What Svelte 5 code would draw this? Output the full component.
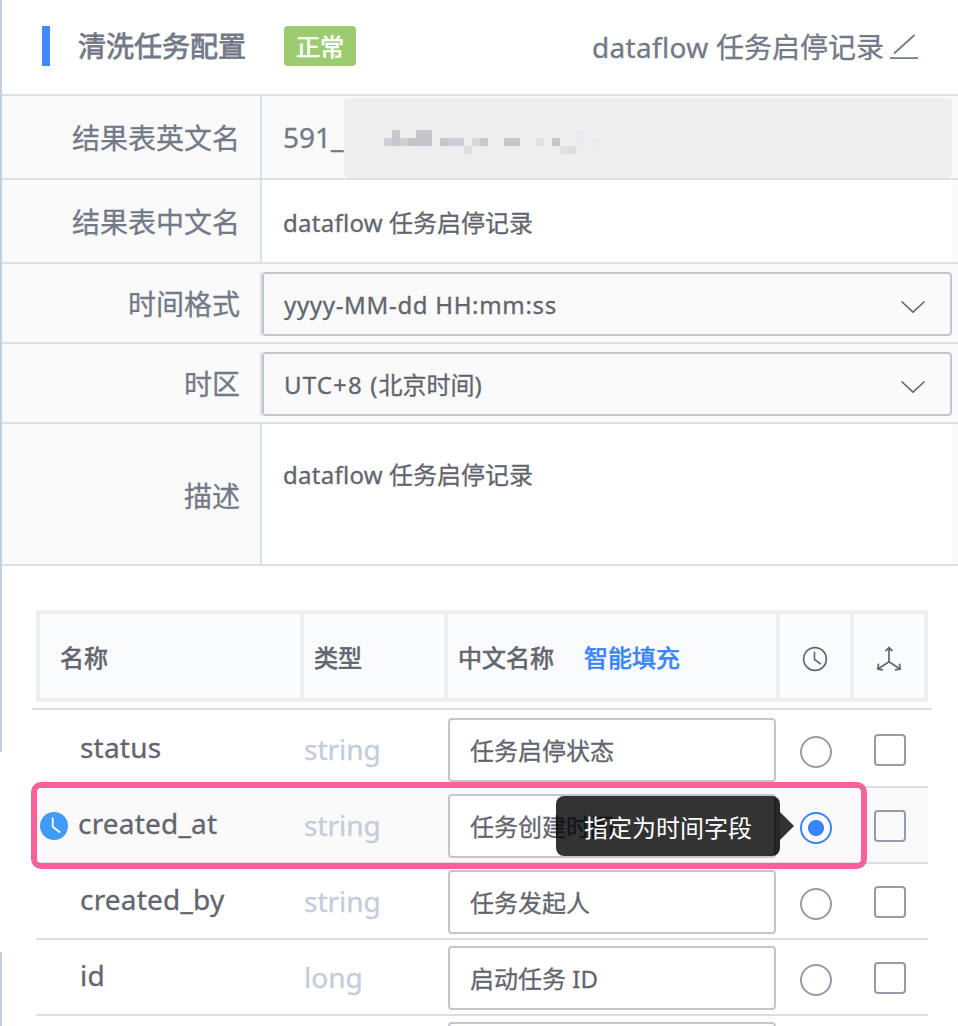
<script>
  const mosaic = [
    [8, 0, 8, 8, '#cacace'], [32, 0, 16, 16, '#c5c5cb'],
    [0, 8, 8, 8, '#d0d0d6'], [8, 8, 8, 8, '#c7c7cd'], [16, 8, 8, 8, '#cfcfd4'], [24, 8, 8, 8, '#c2c2c8'],
    [56, 8, 8, 8, '#c5c5cb'], [64, 8, 16, 8, '#ceced4'], [80, 16, 8, 8, '#dddee1'], [88, 8, 8, 8, '#d9d9dd'],
    [96, 8, 8, 8, '#c7c7cc'], [120, 8, 16, 8, '#c5c5cc'], [152, 8, 8, 8, '#e2e3e5'], [168, 8, 8, 8, '#c5c5cc'],
    [176, 16, 8, 8, '#e1e1e3'], [184, 16, 8, 8, '#dcdcdf'], [192, 0, 8, 16, '#ebebee'], [208, 8, 8, 8, '#ebebec']
  ];
  const rows = [
    { name: 'status', type: 'string', label: '任务启停状态' },
    { name: 'created_at', type: 'string', label: '任务创建时间', active: true },
    { name: 'created_by', type: 'string', label: '任务发起人' },
    { name: 'id', type: 'long', label: '启动任务 ID' },
    { name: '', type: '', label: '' }
  ];
</script>

{#snippet chevron()}
  <svg class="chevron" width="26" height="14" viewBox="0 0 26 14" fill="none" stroke="#63656e" stroke-width="1.6"><path d="M1.5 1.5 13 12.2 24.5 1.5" /></svg>
{/snippet}

<div class="page">
  <div class="rail top"></div>
  <div class="rail bottom"></div>
  <header>
    <i class="bar"></i>
    <h1>清洗任务配置</h1>
    <span class="tag">正常</span>
    <div class="task"><span class="lat">dataflow</span> 任务启停记录</div>
    <svg class="edit" width="28" height="26" viewBox="0 0 28 26" fill="none" stroke="#737987" stroke-width="1.7"><path d="M4 19.5 24.5 1M0 24.2h28" /></svg>
  </header>

  <section class="form">
    <div class="frow">
      <div class="label">结果表英文名</div>
      <div class="value gray"><span class="prefix">591_</span>
        <div class="masked">
          <svg width="216" height="24" viewBox="0 0 216 24" shape-rendering="crispEdges">
            {#each mosaic as [x, y, w, h, c]}<rect {x} {y} width={w} height={h} fill={c} />{/each}
          </svg>
        </div>
      </div>
    </div>
    <div class="frow">
      <div class="label">结果表中文名</div>
      <div class="value"><span class="text"><span class="lat">dataflow</span> 任务启停记录</span></div>
    </div>
    <div class="frow short">
      <div class="label">时间格式</div>
      <div class="select"><span class="fmt">yyyy-MM-dd HH:mm:ss</span>{@render chevron()}</div>
    </div>
    <div class="frow short">
      <div class="label">时区</div>
      <div class="select"><span><span class="utc">UTC+8 (</span>北京时间)</span>{@render chevron()}</div>
    </div>
    <div class="frow tall">
      <div class="label">描述</div>
      <div class="value"><span class="text"><span class="lat">dataflow</span> 任务启停记录</span></div>
    </div>
  </section>

  <div class="thead">
    <div class="th c1">名称</div>
    <div class="th c2">类型</div>
    <div class="th c3">中文名称<a>智能填充</a></div>
    <div class="th ic">
      <svg width="26" height="26" viewBox="0 0 26 26" fill="none" stroke="#63656e" stroke-width="1.6"><circle cx="13" cy="13" r="11.4" /><path d="M12.5 5.8v7.7l6.3 4.7" /></svg>
    </div>
    <div class="th ic">
      <svg width="26" height="26" viewBox="0 0 26 26" fill="none" stroke="#63656e" stroke-width="1.7"><path d="M13 1.5v14.3M9.6 5.2 13 1.5l3.4 3.7M13 15.8 2 23M13 15.8 24 23M2.6 17.6 1.8 23l5.2.9M23.4 17.6l.8 5.4-5.2.9" /></svg>
    </div>
  </div>

  <div class="tbody">
    {#each rows as row}
      <div class="tr" class:active={row.active}>
        <div class="name">
          {#if row.active}
            <svg class="clock" width="28" height="28" viewBox="0 0 28 28" fill="none"><circle cx="14" cy="14" r="14" fill="#419bf9" /><path d="M12.7 5.5v9.3l7.5 5.7" stroke="#fff" stroke-width="1.8" /></svg>
          {/if}
          <span>{row.name}</span>
        </div>
        <div class="type">{row.type}</div>
        <div class="input">{row.label}</div>
        <div class="radio"></div>
        <div class="check"></div>
        {#if row.active}
          <div class="tooltip">指定为时间字段</div>
          <div class="highlight"></div>
        {/if}
      </div>
    {/each}
  </div>
</div>

<style>
  :global(body) { background: #fff; overflow: hidden; }
  * { box-sizing: border-box; }
  .page { position: relative; width: 958px; height: 1026px; overflow: hidden; color: #63656e; font: 24px/32px "Noto Sans", "Noto Sans CJK SC", sans-serif; white-space: nowrap; -webkit-text-stroke: .3px; }
  .rail { position: absolute; left: 0; width: 2px; background: #c3cdde; }
  .rail.top { top: 0; height: 752px; }
  .rail.bottom { top: 952px; height: 74px; }
  header { display: flex; align-items: center; height: 94px; padding: 0 40px 2px 42px; color: #737987; }
  .bar { width: 8px; height: 40px; background: #4289ff; margin-right: 28px; }
  h1 { margin: 0; font-size: 28px; font-weight: 400; line-height: 40px; width: 168px; -webkit-text-stroke: .8px; }
  .tag { margin-left: 38px; width: 72px; height: 40px; border-radius: 4px; background: #9dcb6f; color: #fff; line-height: 42px; text-align: center; -webkit-text-stroke: .7px; }
  .task { margin-left: auto; font-size: 28px; line-height: 40px; padding-top: 2px; }
  .lat { letter-spacing: .27px; }
  .task .lat { letter-spacing: .35px; }
  .edit { margin: 1px 0 0 6px; }
  .form { margin-left: 2px; border-top: 2px solid #dce1e9; background: #fafafa; }
  .frow { display: flex; height: 84px; border-bottom: 2px solid #dce1e9; }
  .frow.short { height: 80px; align-items: center; }
  .frow.tall { height: 142px; }
  .label { width: 258px; padding: 2px 20px 0 0; text-align: right; align-self: center; font-size: 28px; line-height: 40px; color: #737987; }
  .tall .label { padding-top: 4px; }
  .value { width: 692px; border-left: 2px solid #dce1e9; background: #fff; display: flex; align-items: center; padding: 4px 0 0 21px; }
  .value.gray { background: #fafafa; padding: 0 0 0 21px; }
  .tall .value { align-items: flex-start; padding-top: 35px; }
  .prefix { width: 61px; font-size: 28px; color: #737987; }
  .masked { width: 608px; height: 80px; margin-top: 2px; border-radius: 4px; background: #eee; padding: 32px 0 0 40px; }
  .masked svg, svg { display: block; flex: none; }
  .select { position: relative; width: 690px; height: 64px; margin: 2px 0 0 2px; border: 2px solid #c4c6cc; border-radius: 4px; display: flex; align-items: center; justify-content: space-between; padding: 0 24px 0 20px; }
  .select > span { padding-top: 2px; }
  .fmt { letter-spacing: .68px; }
  .utc { letter-spacing: 1.15px; }
  .select::before { content: ""; position: absolute; left: -4px; top: -2px; width: 2px; height: 64px; background: #dce1e9; }
  .chevron { margin-top: 6px; }
  .thead { display: grid; grid-template-columns: 260px 140px 328px 70px 70px; gap: 4px; width: 892px; height: 92px; margin: 44px 0 6px 36px; padding: 4px; background: #eee; }
  .th { background: #fafbfd; display: flex; align-items: center; -webkit-text-stroke: .7px; padding-top: 4px; }
  .c1 { padding-left: 20px; }
  .c2 { padding-left: 10px; }
  .c3 { padding-left: 10px; }
  .c3 a { color: #3a84ff; margin-left: 30px; }
  .ic { justify-content: center; padding-top: 6px; }
  .tbody { position: relative; margin-left: 36px; width: 892px; }
  .tbody::before { content: ""; display: block; height: 2px; margin: 0 -4px; background: #dcdee5; }
  .tr { position: relative; display: flex; align-items: flex-start; height: 76px; padding-top: 6px; }
  .tr::after { content: ""; position: absolute; z-index: 1; left: 0; right: 0; bottom: -2px; height: 2px; background: #dcdee5; }
  .tr.active { background: #fafafa; }
  .name { width: 268px; padding-left: 44px; font-size: 28px; line-height: 40px; letter-spacing: .2px; display: flex; align-items: center; margin-top: 9px; }
  .name, .type, .input, .radio, .check { position: relative; top: 2px; }
  .active .name { padding-left: 4px; }
  .clock { margin: 5px 10px 0 0; }
  .type { width: 144px; font-size: 28px; line-height: 40px; color: #c4cdda; margin-top: 11px; }
  .input { width: 328px; height: 64px; border: 2px solid #c4c6cc; border-radius: 4px; background: #fff; padding-left: 20px; line-height: 61px; }
  .radio { width: 32px; height: 32px; border: 2px solid #979ba5; border-radius: 50%; background: #fff; margin: 18px 0 0 24px; }
  .active .radio { border-color: #3a84ff; background: radial-gradient(circle, #3a84ff 7.6px, #fff 8.4px); }
  .check { width: 32px; height: 32px; border: 2px solid #979ba5; border-radius: 4px; background: #fff; margin: 16px 0 0 42px; }
  .active .check { background: transparent; }
  .tooltip { position: absolute; z-index: 3; left: 520px; top: 10px; width: 224px; height: 60px; border-radius: 8px; background: linear-gradient(90deg, rgba(0,0,0,.8) 218px, rgba(0,0,0,.84) 218px); color: #fff; line-height: 63px; padding-left: 28px; -webkit-text-stroke: 0; }
  .tooltip::after { content: ""; position: absolute; left: 224px; top: 16px; border: 14px solid transparent; border-left-color: #323232; border-right: 0; }
  .highlight { position: absolute; z-index: 2; left: -5px; top: -4px; width: 836px; height: 87px; border: 6px solid #fb6199; border-radius: 10px; }
</style>
